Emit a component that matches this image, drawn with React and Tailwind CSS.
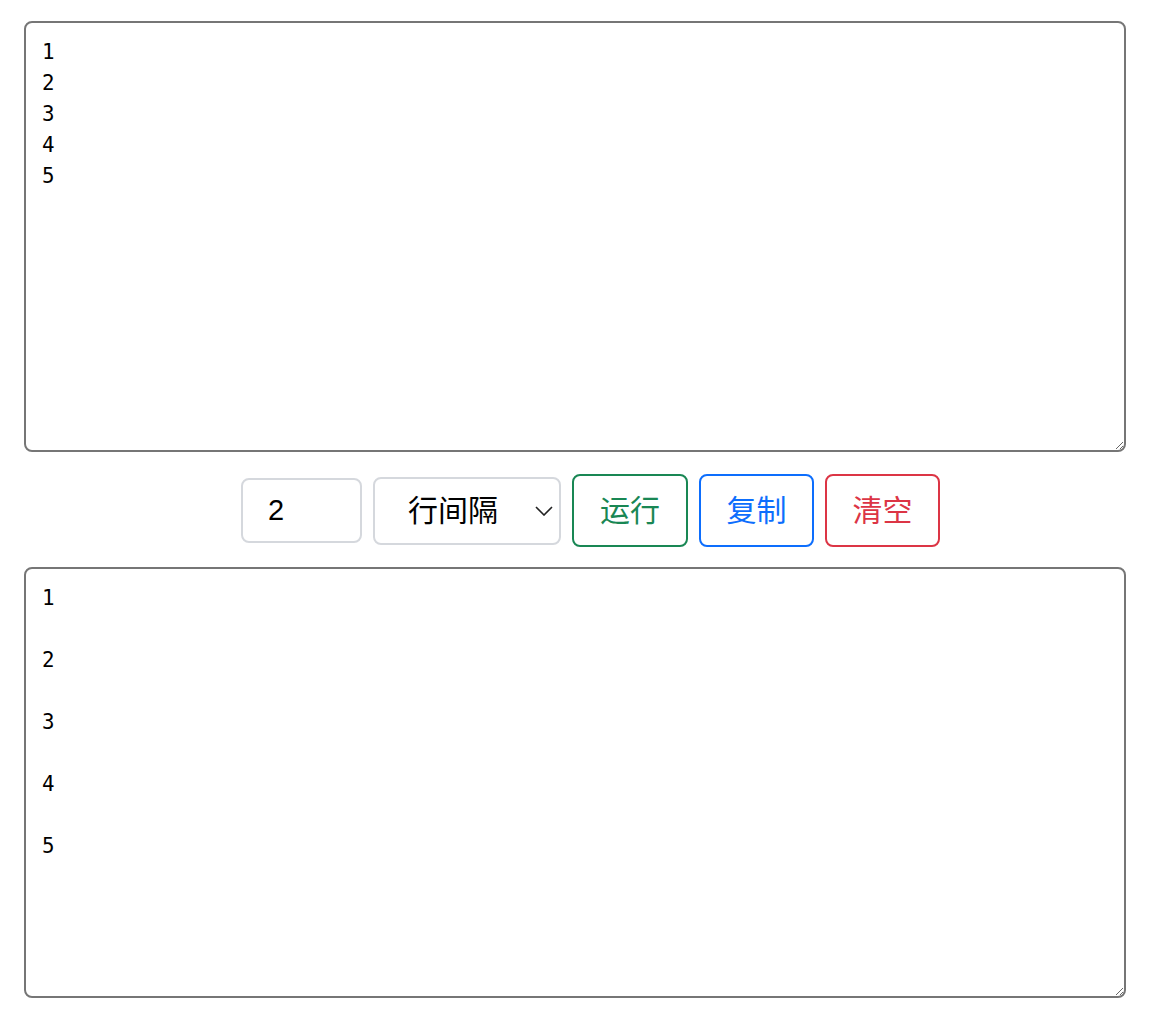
import { useState } from "react";

export default function App() {
  const [input, setInput] = useState("1\n2\n3\n4\n5");
  const [count, setCount] = useState("2");
  const [mode, setMode] = useState("gap");
  const [output, setOutput] = useState("1\n\n2\n\n3\n\n4\n\n5");

  const handleRun = () => {
    const n = Math.max(1, parseInt(count, 10) || 1);
    const lines = input.split("\n");
    setOutput(lines.join("\n".repeat(n)));
  };

  const handleCopy = () => {
    navigator.clipboard?.writeText(output).catch(() => {});
  };

  const handleClear = () => {
    setInput("");
    setOutput("");
  };

  return (
    <div className="min-h-screen bg-white pt-[21px] pb-[23px]">
      <textarea
        value={input}
        onChange={(e) => setInput(e.target.value)}
        className="block ml-6 w-[1102px] h-[431px] border-2 border-[#767676] rounded-lg px-4 pt-[14px] pb-3 text-[20.8px] leading-[31px] text-black [font-family:DejaVu_Sans_Mono,monospace] outline-none"
      />

      {/* controls */}
      <div className="flex items-center justify-center gap-[11px] pl-[30px] mt-[22px] mb-[20px] [font-family:Liberation_Sans,Noto_Sans_CJK_SC,sans-serif]">
        <input
          type="text"
          value={count}
          onChange={(e) => setCount(e.target.value)}
          className="w-[121px] h-[65px] border-2 border-[#d5d8dd] rounded-lg pl-[25px] text-[29px] text-black outline-none"
        />
        <div className="relative">
          <select
            value={mode}
            onChange={(e) => setMode(e.target.value)}
            className="appearance-none w-[188px] h-[68px] border-2 border-[#d5d8dd] rounded-lg pl-[33px] text-[30px] text-black bg-white outline-none"
          >
            <option value="gap">行间隔</option>
          </select>
          <svg
            className="absolute right-[8px] top-[29px] pointer-events-none"
            width="18"
            height="10"
            viewBox="0 0 18 10"
            fill="none"
          >
            <path d="M1 1l8 8 8-8" stroke="#222" strokeWidth="1.6" />
          </svg>
        </div>
        <button
          onClick={handleRun}
          className="w-[116px] h-[73px] border-2 border-[#198754] rounded-lg text-[30px] text-[#198754] bg-white"
        >
          运行
        </button>
        <button
          onClick={handleCopy}
          className="w-[115px] h-[73px] border-2 border-[#0d6efd] rounded-lg text-[30px] text-[#0d6efd] bg-white"
        >
          复制
        </button>
        <button
          onClick={handleClear}
          className="w-[115px] h-[73px] border-2 border-[#dc3545] rounded-lg text-[30px] text-[#dc3545] bg-white"
        >
          清空
        </button>
      </div>

      <textarea
        value={output}
        readOnly
        className="block ml-6 w-[1102px] h-[431px] border-2 border-[#767676] rounded-lg px-4 pt-[14px] pb-3 text-[20.8px] leading-[31px] text-black [font-family:DejaVu_Sans_Mono,monospace] outline-none"
      />
    </div>
  );
}
